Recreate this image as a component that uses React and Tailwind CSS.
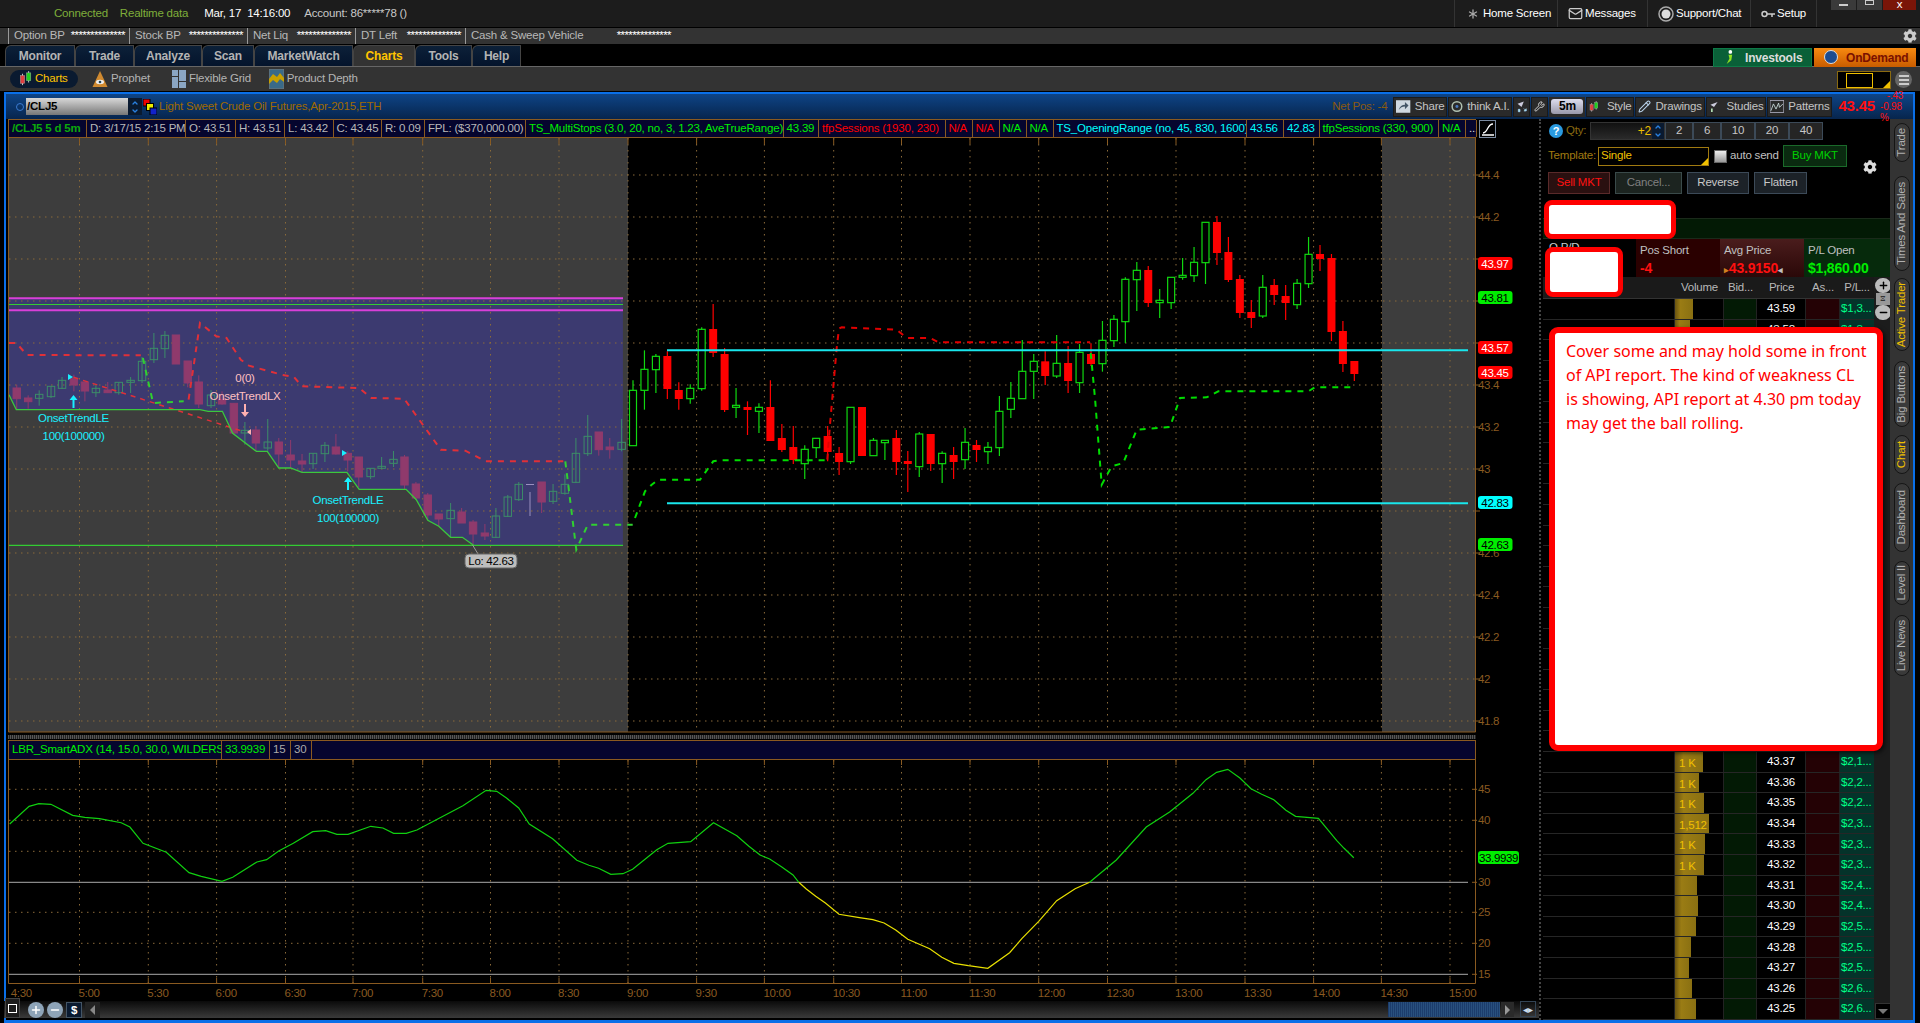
import React from "react";
import { Asterisk, Mail, ChevronUp, ChevronDown, Plus, Minus, Wrench, Pencil } from "lucide-react";
import { FaCog } from "react-icons/fa";

// bright candles, [wickTop, bodyTop, bodyBottom, wickBottom, dir]
const candles = [
  [547, 577, 743, 743, "u"], [457, 514, 577, 635, "u"], [468, 475, 515, 585, "u"], [460, 474, 573, 603, "d"],
  [553, 576, 603, 635, "d"], [559, 571, 602, 617, "u"], [388, 394, 572, 578, "u"], [318, 393, 465, 477, "d"],
  [450, 468, 636, 642, "d"], [570, 622, 628, 660, "u"], [610, 627, 636, 711, "d"], [616, 628, 640, 705, "u"],
  [547, 627, 729, 729, "d"], [678, 720, 756, 762, "d"], [684, 747, 786, 798, "d"], [742, 754, 797, 843, "u"],
  [721, 721, 749, 780, "u"], [684, 714, 762, 790, "d"], [747, 765, 792, 831, "d"], [628, 628, 791, 798, "u"],
  [627, 627, 774, 774, "d"], [720, 727, 773, 773, "u"], [727, 727, 734, 786, "u"], [696, 720, 792, 831, "d"],
  [759, 789, 798, 882, "d"], [702, 708, 806, 837, "u"], [708, 708, 798, 819, "d"], [760, 766, 797, 855, "u"],
  [747, 771, 792, 843, "d"], [690, 733, 785, 813, "u"], [726, 741, 756, 792, "d"], [732, 748, 761, 798, "u"],
  [594, 640, 749, 774, "u"], [552, 601, 634, 660, "u"], [426, 520, 602, 602, "u"], [468, 490, 520, 603, "u"],
  [460, 490, 534, 561, "d"], [411, 496, 534, 540, "u"], [444, 495, 549, 585, "d"], [438, 463, 554, 585, "u"],
  [436, 468, 498, 504, "d"], [369, 427, 497, 521, "u"], [351, 364, 428, 447, "u"], [238, 244, 371, 435, "u"],
  [192, 217, 245, 339, "u"], [204, 216, 315, 327, "d"], [273, 307, 314, 360, "u"], [238, 238, 314, 333, "u"],
  [180, 232, 238, 245, "u"], [147, 193, 233, 252, "u"], [73, 73, 194, 258, "u"], [54, 72, 165, 201, "d"],
  [117, 162, 246, 252, "d"], [231, 243, 345, 360, "d"], [306, 342, 360, 390, "d"], [231, 268, 354, 360, "u"],
  [243, 261, 291, 321, "d"], [261, 294, 315, 366, "d"], [243, 256, 320, 333, "u"], [117, 169, 257, 270, "u"],
  [141, 168, 183, 219, "d"], [168, 180, 402, 429, "d"], [369, 399, 498, 522, "d"], [489, 489, 528, 549, "d"],
];

// pre market candles, [x, wickTop, bodyTop, bodyBottom, wickBottom, dir]
const oldCandles = [
  [41, 320, 330, 362, 395, "d"], [69, 352, 360, 371, 392, "d"], [96, 337, 349, 361, 383, "u"], [125, 325, 325, 356, 360, "u"],
  [152, 297, 307, 331, 333, "u"], [181, 290, 302, 321, 340, "d"], [208, 312, 312, 339, 370, "d"], [235, 320, 331, 344, 357, "u"],
  [264, 312, 336, 344, 345, "d"], [291, 313, 313, 344, 350, "u"], [320, 297, 307, 313, 345, "u"], [348, 237, 250, 308, 315, "u"],
  [377, 165, 211, 245, 255, "u"], [404, 159, 172, 212, 240, "u"], [431, 171, 171, 258, 258, "d"], [460, 249, 249, 315, 328, "d"],
  [487, 292, 312, 378, 390, "d"], [517, 336, 351, 383, 390, "u"], [544, 340, 364, 378, 380, "d"], [573, 376, 376, 465, 468, "d"],
  [600, 432, 457, 465, 500, "u"], [627, 445, 456, 495, 518, "d"], [656, 423, 492, 510, 518, "u"], [683, 480, 492, 528, 570, "d"],
  [712, 486, 531, 546, 570, "d"], [740, 528, 549, 558, 582, "d"], [767, 526, 526, 557, 573, "u"], [796, 492, 502, 527, 552, "u"],
  [823, 468, 507, 528, 530, "d"], [852, 520, 526, 546, 580, "d"], [879, 537, 537, 597, 627, "d"], [908, 571, 571, 596, 603, "u"],
  [935, 537, 565, 571, 573, "u"], [964, 519, 544, 556, 567, "u"], [991, 531, 537, 621, 633, "d"], [1019, 612, 618, 660, 664, "d"],
  [1048, 645, 651, 711, 726, "d"], [1075, 708, 708, 723, 745, "d"], [1104, 675, 697, 722, 778, "u"], [1131, 690, 702, 735, 735, "d"],
  [1159, 726, 732, 768, 800, "d"], [1188, 738, 765, 774, 786, "d"], [1215, 690, 714, 778, 780, "u"], [1244, 651, 657, 715, 717, "u"],
  [1271, 612, 619, 665, 669, "u"], [1327, 612, 612, 672, 705, "d"], [1355, 618, 640, 670, 678, "u"], [1384, 589, 619, 646, 650, "u"],
  [1411, 480, 526, 613, 615, "u"], [1440, 411, 475, 527, 534, "u"], [1467, 462, 462, 515, 533, "d"], [1494, 480, 507, 515, 542, "d"],
  [1523, 423, 493, 514, 520, "u"],
];

const gridX = [79.5, 148.3, 216.6, 285.5, 353, 422.7, 490.5, 559, 628, 696.6, 764.4, 833.7, 901.5, 970, 1038.7, 1107.5, 1176, 1245, 1313.6, 1381.4, 1450];
const times = ["5:00", "5:30", "6:00", "6:30", "7:00", "7:30", "8:00", "8:30", "9:00", "9:30", "10:00", "10:30", "11:00", "11:30", "12:00", "12:30", "13:00", "13:30", "14:00", "14:30", "15:00"];
const gridY = [177, 219, 261, 303, 345, 387, 429, 471, 513, 555, 597, 639, 681, 723];
const priceLabels = [[177, "44.4"], [219, "44.2"], [387, "43.4"], [429, "43.2"], [471, "43"], [555, "42.6"], [597, "42.4"], [639, "42.2"], [681, "42"], [723, "41.8"]];

const a4 = (pts) => pts.map(([x, y]) => `${(x / 2.45).toFixed(1)},${(280 + y / 3).toFixed(1)}`).join(" ");
const a5 = (pts) => pts.map(([x, y]) => `${(620 + x / 3).toFixed(1)},${(200 + y / 3).toFixed(1)}`).join(" ");
const a6 = (pts) => pts.map(([x, y]) => `${(1060 + x / 3).toFixed(1)},${(200 + y / 3).toFixed(1)}`).join(" ");
const a8 = (pts) => pts.map(([x, y]) => `${(x / 2.063).toFixed(1)},${(730 + y / 3).toFixed(1)}`).join(" ");
const a9 = (pts) => pts.map(([x, y]) => `${(760 + x / 2.063).toFixed(1)},${(730 + y / 3).toFixed(1)}`).join(" ");

const CandleIcon = ({ className }) => (
  <svg viewBox="0 0 16 18" className={className}>
    <path d="M4 3v13M11 0v13" stroke="#ddd" strokeWidth="1" />
    <rect x="1.5" y="5" width="5" height="9" fill="#e04040" stroke="#aaa" strokeWidth=".5" />
    <rect x="8.5" y="2" width="5" height="9" fill="#20d020" stroke="#aaa" strokeWidth=".5" />
  </svg>
);

const Arrow = ({ x, y, color, down }) => (
  <path
    d={down ? `M${x - 1} ${y}h2v8h3l-4 5l-4 -5h3z` : `M${x} ${y}l4 5h-3v8h-2v-8h-3z`}
    fill={color}
  />
);

const MainChart = () => (
  <svg viewBox="4 140 1537 597" className="block w-[1537px] h-[597px]">
    <rect x="8" y="140" width="620" height="594" fill="#3d3d3d" />
    <rect x="1382" y="140" width="93" height="594" fill="#3d3d3d" />
    <polygon
      points={a4([[22, 61], [1526, 61], [1526, 802], [1160, 802], [1133, 778], [1104, 778], [1075, 745], [1048, 727], [1020, 665], [995, 634], [880, 634], [850, 583], [740, 583], [712, 570], [683, 570], [655, 520], [628, 520], [570, 466], [545, 400], [510, 400], [490, 395], [40, 395], [22, 350]])}
      fill="#3c3a70"
    />
    {gridY.map((y) => (
      <line key={y} x1="9" x2="1475" y1={y} y2={y} stroke="#8a6a3a" strokeDasharray="1.5 4.5" />
    ))}
    {gridX.map((x) => (
      <g key={x}>
        <line x1={x} x2={x} y1="140" y2="734" stroke="#8a6a3a" strokeDasharray="1.5 4.5" />
        <line x1={x} x2={x} y1="140" y2="146" stroke="#8a5a20" />
      </g>
    ))}
    {oldCandles.map(([x, wt, bt, bb, wb, d]) => {
      const cx = x / 2.45;
      const c = d === "u" ? "#3c8c68" : "#8f3a6c";
      return (
        <g key={x}>
          <line x1={cx} x2={cx} y1={280 + wt / 3} y2={280 + wb / 3} stroke={c} />
          <rect x={cx - 3.7} y={280 + bt / 3} width="7.4" height={(bb - bt) / 3} fill={d === "u" ? "none" : c} stroke={c} />
        </g>
      );
    })}
    <line x1="530" x2="530" y1="518" y2="494" stroke="#9a90c0" />
    <line x1="526" x2="534" y1="486.5" y2="486.5" stroke="#9a90c0" />
    <polyline points={a4([[22, 195], [40, 195], [66, 231], [345, 232]])} fill="none" stroke="#e03038" strokeWidth="2" strokeDasharray="6 6" />
    <polyline points={a4([[462, 365], [490, 135], [530, 175], [555, 180], [590, 245], [610, 263], [690, 290], [720, 297], [740, 325], [880, 330], [910, 360], [990, 362], [1080, 515], [1140, 518], [1190, 550], [1380, 550]])} fill="none" stroke="#e03038" strokeWidth="2" strokeDasharray="6 6" />
    <polyline points={a4([[180, 298], [600, 462]])} fill="none" stroke="#e03038" strokeWidth="1.5" strokeDasharray="5 5" />
    <polyline points={a4([[350, 240], [375, 375], [450, 370]])} fill="none" stroke="#30d030" strokeWidth="2" strokeDasharray="6 6" />
    <polyline points={a4([[1385, 550], [1412, 815], [1440, 740], [1550, 740]])} fill="none" stroke="#30d030" strokeWidth="2" strokeDasharray="6 6" />
    <polyline points={a4([[22, 350], [40, 395], [490, 395], [510, 400], [545, 400], [570, 466], [628, 520], [655, 520], [683, 570], [712, 570], [740, 583], [850, 583], [880, 634], [995, 634], [1020, 665], [1048, 727], [1075, 745], [1104, 778], [1133, 778], [1160, 802]])} fill="none" stroke="#3cc83c" strokeWidth="1.3" />
    <line x1="9" x2="623" y1="300.3" y2="300.3" stroke="#d93fd9" strokeWidth="2" />
    <line x1="9" x2="623" y1="306.5" y2="306.5" stroke="#33cc33" strokeWidth="1.2" />
    <line x1="9" x2="623" y1="312.3" y2="312.3" stroke="#d93fd9" strokeWidth="2" />
    <line x1="9" x2="623" y1="547.3" y2="547.3" stroke="#33cc33" strokeWidth="1.2" />

    {candles.map(([wt, bt, bb, wb, d], i) => {
      const cx = 633 + 11.45 * i;
      const c = d === "u" ? "#10d810" : "#ff0000";
      return (
        <g key={i}>
          <line x1={cx} x2={cx} y1={200 + wt / 3} y2={200 + wb / 3} stroke={c} strokeWidth="1.2" />
          {d === "u" ? (
            <rect x={cx - 3.5} y={200 + bt / 3} width="7" height={(bb - bt) / 3} fill="#000" stroke={c} strokeWidth="1.2" />
          ) : (
            <rect x={cx - 4} y={200 + bt / 3} width="8" height={(bb - bt) / 3} fill={c} />
          )}
        </g>
      );
    })}
    <polyline points={a5([[45, 960], [60, 920], [75, 880], [95, 860], [115, 845], [240, 845], [280, 790], [300, 787], [620, 787]])} fill="none" stroke="#00dd00" strokeWidth="2" strokeDasharray="6 6" />
    <polyline points={a5([[622, 785], [630, 680], [650, 450], [657, 392], [665, 388], [830, 395], [860, 420], [930, 420], [955, 433], [1410, 433]])} fill="none" stroke="#e00000" strokeWidth="2" strokeDasharray="6 6" />
    <polyline points={a6([[92, 465], [105, 600], [125, 860], [155, 805], [190, 795], [230, 695], [330, 687], [360, 600], [440, 598], [475, 580], [745, 580], [765, 568], [880, 568]])} fill="none" stroke="#00dd00" strokeWidth="2" strokeDasharray="6 6" />
    <line x1="667" x2="1468" y1="352.3" y2="352.3" stroke="#19e6ec" strokeWidth="2" />
    <line x1="667" x2="1468" y1="505.3" y2="505.3" stroke="#19e6ec" strokeWidth="2" />

    <Arrow x={73.5} y={397} color="#19f0ff" />
    <Arrow x={348} y={479} color="#19f0ff" />
    <Arrow x={245} y={406} color="#ffb0b0" down />
    <polygon points="68,376 73,379 68,382" fill="#19f0ff" />
    <polygon points="342,452 347,455 342,458" fill="#19f0ff" />
    <polygon points="251,431 247,434 251,437" fill="#ffb0b0" />
    <g className="text-[11.5px] tracking-[-0.3px]" textAnchor="middle">
      <text x="73.5" y="424" fill="#19f0ff">OnsetTrendLE</text>
      <text x="73.5" y="442" fill="#19f0ff">100(100000)</text>
      <text x="348" y="506" fill="#19f0ff">OnsetTrendLE</text>
      <text x="348" y="524" fill="#19f0ff">100(100000)</text>
      <text x="245" y="384" fill="#ffc0c0">0(0)</text>
      <text x="245" y="402" fill="#ffc0c0">OnsetTrendLX</text>
    </g>
    <line x1="472.6" y1="547" x2="478" y2="556" stroke="#999" />
    <rect x="465" y="556" width="52" height="14" rx="4" fill="#bdbdbd" stroke="#666" />
    <text x="491" y="567" textAnchor="middle" fill="#000" className="text-[11.5px] tracking-[-0.3px]">Lo: 42.63</text>

    <path d="M8.5 140V734H1475.5V140" fill="none" stroke="#8a5a20" />
    {gridY.map((y) => (
      <line key={y} x1="1475" x2="1480" y1={y} y2={y} stroke="#8a5a20" />
    ))}
    <g fill="#8a5a20" className="text-[11.5px] tracking-[-0.3px]">
      {priceLabels.map(([y, t]) => (
        <text key={y} x="1478" y={y + 4}>{t}</text>
      ))}
    </g>
    {[
      [259, "43.97", "#ff0000", "#fff"],
      [293, "43.81", "#00ee00", "#000"],
      [343, "43.57", "#ff0000", "#fff"],
      [368, "43.45", "#ff0000", "#fff"],
      [498, "42.83", "#00ffff", "#000"],
      [540, "42.63", "#00ee00", "#000"],
    ].map(([y, t, bg, fg]) => (
      <g key={y}>
        <rect x="1478" y={y} width="34.5" height="13" rx="3" fill={bg} />
        <text x="1495" y={y + 10.5} textAnchor="middle" fill={fg} className="text-[11.5px] tracking-[-0.3px]">{t}</text>
      </g>
    ))}
  </svg>
);

const adxGreen1 = [[20, 288], [60, 235], [80, 227], [105, 229], [150, 262], [175, 268], [205, 272], [250, 284], [268, 297], [295, 346], [343, 373], [390, 434], [415, 445], [458, 460], [480, 448], [530, 402], [550, 395], [575, 369], [605, 346], [645, 311], [672, 308], [695, 319], [718, 319], [765, 295], [790, 300], [812, 316], [838, 316], [860, 306], [955, 233], [1003, 187], [1025, 190], [1045, 210], [1070, 240], [1092, 288], [1140, 332], [1190, 397], [1215, 412], [1235, 421], [1260, 439], [1285, 437], [1305, 424], [1355, 365], [1378, 346], [1425, 341], [1472, 284], [1520, 323], [1545, 355], [1568, 381]];
const adxGreen2 = [[0, 381], [20, 393], [45, 417], [68, 441], [80, 463]];
const adxYellow = [[80, 463], [95, 482], [115, 505], [135, 525], [163, 559], [205, 569], [233, 575], [256, 585], [280, 606], [305, 634], [350, 662], [375, 688], [400, 706], [430, 713], [470, 721], [515, 674], [540, 632], [575, 580], [612, 518], [650, 482], [680, 463]];
const adxGreen3 = [[680, 463], [735, 396], [797, 297], [845, 252], [893, 196], [920, 155], [942, 133], [965, 124], [990, 150], [1013, 182], [1035, 199], [1060, 215], [1085, 247], [1105, 265], [1152, 271], [1190, 338], [1205, 361], [1225, 389]];

const SubChart = () => (
  <svg viewBox="4 762 1537 241" className="block w-[1537px] h-[241px]">
    {[791.3, 822.3, 853.3, 914.3, 945.3].map((y) => (
      <line key={y} x1="9" x2="1465" y1={y} y2={y} stroke="#8a6a3a" strokeDasharray="1.5 4.5" />
    ))}
    {gridX.map((x) => (
      <g key={x}>
        <line x1={x} x2={x} y1="762" y2="986" stroke="#8a6a3a" strokeDasharray="1.5 4.5" />
        <line x1={x} x2={x} y1="762" y2="767" stroke="#8a5a20" />
        <line x1={x} x2={x} y1="980" y2="986" stroke="#8a5a20" />
      </g>
    ))}
    <line x1="9" x2="1468" y1="884.3" y2="884.3" stroke="#aaa" />
    <line x1="9" x2="1468" y1="976.3" y2="976.3" stroke="#aaa" />
    <polyline points={a8(adxGreen1)} fill="none" stroke="#10d010" strokeWidth="1.2" />
    <polyline points={a9(adxGreen2)} fill="none" stroke="#10d010" strokeWidth="1.2" />
    <polyline points={a9(adxYellow)} fill="none" stroke="#e8e000" strokeWidth="1.2" />
    <polyline points={a9(adxGreen3)} fill="none" stroke="#10d010" strokeWidth="1.2" />
    <path d="M8.5 762V985.5H1475.5V762" fill="none" stroke="#8a5a20" />
    <g fill="#8a5a20" className="text-[11.5px] tracking-[-0.3px]">
      {[[791.3, "45"], [822.3, "40"], [884.3, "30"], [914.3, "25"], [945.3, "20"], [976.3, "15"]].map(([y, t]) => (
        <g key={t}>
          <line x1="1472" x2="1477" y1={y} y2={y} stroke="#8a5a20" />
          <text x="1478" y={y + 4}>{t}</text>
        </g>
      ))}
      <text x="10.7" y="999">4:30</text>
      {times.map((t, i) => (
        <text key={t} x={gridX[i] - 1} y="999">{t}</text>
      ))}
    </g>
    <rect x="1478" y="853" width="41" height="13" rx="3" fill="#00ee00" />
    <text x="1498.5" y="863.5" textAnchor="middle" fill="#000" className="text-[11.5px] tracking-[-0.4px]">33.9939</text>
  </svg>
);

const StudyCell = ({ w, c, bold, children }) => (
  <div className={`shrink-0 h-full flex items-center pl-[3px] whitespace-nowrap overflow-hidden border-r border-[#8a5a20] ${bold ? "font-bold" : ""}`} style={{ width: w, color: c }}>
    {children}
  </div>
);

const studies = [
  [78, "#0ca80c", "/CLJ5 5 d 5m", true],
  [99, "#b8b8b8", "D: 3/17/15 2:15 PM"],
  [50, "#b8b8b8", "O: 43.51"],
  [49, "#b8b8b8", "H: 43.51"],
  [48.5, "#b8b8b8", "L: 43.42"],
  [48.5, "#b8b8b8", "C: 43.45"],
  [43, "#b8b8b8", "R: 0.09"],
  [101, "#b8b8b8", "FPL: ($370,000.00)"],
  [257.5, "#00ee00", "TS_MultiStops (3.0, 20, no, 3, 1.23, AveTrueRange)"],
  [35.5, "#00ee00", "43.39"],
  [126.5, "#ff0000", "tfpSessions (1930, 230)"],
  [27, "#ff0000", "N/A"],
  [27, "#ff0000", "N/A"],
  [27, "#00ee00", "N/A"],
  [27, "#00ee00", "N/A"],
  [193.5, "#00ffff", "TS_OpeningRange (no, 45, 830, 1600)"],
  [37, "#00ffff", "43.56"],
  [35.5, "#00ffff", "42.83"],
  [119.5, "#00ee00", "tfpSessions (330, 900)"],
  [27, "#00ee00", "N/A"],
  [10.5, "#ddd", "..."],
];

const tabs = [
  ["Monitor", 70], ["Trade", 59], ["Analyze", 68], ["Scan", 52], ["MarketWatch", 99], ["Charts", 62], ["Tools", 57], ["Help", 49],
];

const ToolBtn = ({ w, children }) => (
  <div className="shrink-0 h-[20px] flex items-center gap-[4px] px-[2px] bg-[#2a2a2a] border border-[#1a1a1a] text-[#c4c4c4] whitespace-nowrap" style={{ width: w }}>
    {children}
  </div>
);

const QtyBtn = ({ w, children }) => (
  <div className="shrink-0 h-[18px] flex items-center justify-center bg-[#252525] border border-[#3c4a58] text-[#c8c8c8]" style={{ width: w }}>{children}</div>
);

const ActBtn = ({ w, className, children }) => (
  <div className={`shrink-0 h-[22px] flex items-center justify-center border ${className}`} style={{ width: w }}>{children}</div>
);

const volumes = {
  0: 18, 1: 15, 21: 35, 22: 28, 23: 24, 24: 29, 25: 34, 26: 30, 27: 29, 28: 22, 29: 23, 30: 21, 31: 16, 32: 14, 33: 17, 34: 21,
};
const volText = { 21: "1,554", 22: "1 K", 23: "1 K", 24: "1 K", 25: "1,512", 26: "1 K", 27: "1 K" };

const LadderRow = ({ i }) => {
  const price = 43.59 - i * 0.01;
  const pl = Math.round((43.915 - price) * 4000);
  return (
    <div className="grid grid-cols-[132px_49px_33px_49px_34px_34px] h-[21px] border-b border-[#262626]">
      <div className="border-r border-[#222]" />
      <div className="relative border-r border-[#222]">
        <div className="absolute left-0 top-0 bottom-0 bg-[linear-gradient(90deg,#6a5410,#9a7c14_30%,#8a7012)]" style={{ width: volumes[i] ?? 26 }} />
        <span className="absolute left-[4px] top-[3px] text-[#f0c000]">{volText[i]}</span>
      </div>
      <div className="bg-[#031a05] border-r border-[#222]" />
      <div className="flex items-center justify-center text-white border-r border-[#222]">{price.toFixed(2)}</div>
      <div className="bg-[#240205] border-r border-[#222]" />
      <div className="bg-[#04332a] flex items-center pl-[1px] text-[#00ff88] whitespace-nowrap">{`$${Math.floor(pl / 1000)},${Math.floor(pl / 100) % 10}...`}</div>
    </div>
  );
};

const SideTab = ({ active, h, mt, children }) => (
  <div className={`w-[16px] flex items-center justify-center rounded-[8px] border border-[#151515] bg-[#3a3a3a] ${active ? "text-[#f0c000]" : "text-[#b0b0b0]"}`} style={{ height: h, marginTop: mt }}>
    <span className="[writing-mode:vertical-rl] rotate-180 whitespace-nowrap">{children}</span>
  </div>
);

export default function App() {
  return (
    <div className="w-[1920px] h-[1023px] overflow-hidden bg-black font-['Liberation_Sans',sans-serif] text-[11.5px] tracking-[-0.2px] flex flex-col">
      {/* top status */}
      <div className="h-[28px] shrink-0 bg-[#1c1c1c] border-b border-black flex items-center text-[#c8c8c8] relative">
        <span className="ml-[54px] text-[#7fae3a]">Connected</span>
        <span className="ml-[12px] text-[#7fae3a]">Realtime data</span>
        <span className="ml-[16px] text-white">Mar, 17&nbsp;&nbsp;14:16:00</span>
        <span className="ml-[14px]">Account: 86*****78 ()</span>
        <div className="ml-auto mr-[103px] flex items-center h-full text-white">
          <div className="w-[103px] h-full border-l border-[#333] flex items-center pl-[10px] gap-[2px]"><Asterisk size={16} className="text-[#aaa]" />Home Screen</div>
          <div className="w-[90px] h-full border-l border-[#333] flex items-center pl-[10px] gap-[2px]"><Mail size={15} className="text-[#ccc]" />Messages</div>
          <div className="w-[103px] h-full border-l border-[#333] flex items-center pl-[10px] gap-[2px]">
            <svg viewBox="0 0 16 16" className="w-[16px] h-[16px]"><circle cx="8" cy="8" r="7" fill="none" stroke="#aaa" strokeWidth="1.5" /><circle cx="8" cy="8" r="4.5" fill="#ddd" /></svg>
            Support/Chat
          </div>
          <div className="w-[67px] h-full border-x border-[#333] flex items-center pl-[10px] gap-[2px]">
            <svg viewBox="0 0 14 8" className="w-[14px] h-[8px]"><circle cx="3.5" cy="4" r="2.5" fill="none" stroke="#ccc" strokeWidth="1.5" /><path d="M6 4h8M11 4v3" stroke="#ccc" strokeWidth="1.5" /></svg>
            Setup
          </div>
        </div>
        <div className="absolute right-[4px] top-0 flex gap-[1px]">
          <div className="w-[25px] h-[10px] bg-[#3a3a3a] flex justify-center items-center"><div className="w-[9px] h-[2px] bg-[#ccc]" /></div>
          <div className="w-[25px] h-[10px] bg-[#3a3a3a] flex justify-center"><div className="w-[9px] h-[5px] border border-[#ccc]" /></div>
          <div className="w-[33px] h-[10px] bg-[#7a1508] text-center text-white leading-[8px]">x</div>
        </div>
      </div>

      {/* account bar */}
      <div className="h-[16px] shrink-0 bg-[#333] flex items-center text-[#b8b8b8] pl-[8px] relative">
        {[
          ["Option BP", 121],
          ["Stock BP", 118],
          ["Net Liq", 108],
          ["DT Left", 110],
          ["Cash & Sweep Vehicle", 210],
        ].map(([t, w]) => (
          <div key={t} className="h-full flex items-center justify-between border-l border-[#999] pl-[5px] pr-[4px]" style={{ width: w }}>
            <span>{t}</span>
            <span className="text-white tracking-[-0.6px]">**************</span>
          </div>
        ))}
        <FaCog className="absolute right-[3px] top-[1px] text-[#ccc]" size={14} />
      </div>

      {/* main tabs */}
      <div className="h-[23px] shrink-0 bg-black flex items-end pl-[5px] border-b border-[#666] relative">
        {tabs.map(([t, w]) => (
          <div
            key={t}
            className={`h-[21px] flex items-center justify-center text-[12px] font-bold rounded-tl-[6px] border-t border-x border-[#444] ${t === "Charts" ? "bg-[#333] text-[#ffc400]" : "bg-[linear-gradient(180deg,#0c2038,#04142c)] text-[#b4b4b4]"}`}
            style={{ width: w }}
          >
            {t}
          </div>
        ))}
        <div className="absolute left-[1713px] top-[4px] w-[99px] h-[19px] bg-[#0a6038] border border-[#0e7a48] flex items-center text-[#ddd] font-bold text-[12px] pl-[31px]">Investools</div>
        <div className="absolute left-[1814px] top-[4px] w-[102px] h-[19px] bg-[linear-gradient(180deg,#f88a10,#c85c00)] flex items-center text-[#7a1000] font-bold text-[12px] pl-[32px]">OnDemand</div>
        <svg viewBox="0 0 14 16" className="absolute left-[1722px] top-[6px] w-[13px] h-[15px]"><circle cx="9" cy="2" r="2" fill="#fff" /><path d="M7 5h4l-1 6l-5 4l3 -6z" fill="#8fe020" /></svg>
        <div className="absolute left-[1824px] top-[6px] w-[14px] h-[14px] rounded-full bg-[#1c4c90] border border-[#ddd]" />
      </div>

      {/* sub tabs */}
      <div className="h-[24px] shrink-0 bg-[#333] flex items-center text-[#b4b4b4] pl-[10px] relative">
        <div className="w-[68px] h-[18px] rounded-full bg-[#0a1a30] flex items-center pl-[9px] gap-[2px] text-[#ffc400]"><CandleIcon className="w-[14px] h-[16px]" />Charts</div>
        <div className="ml-[14px] flex items-center gap-[3px]">
          <svg viewBox="0 0 16 18" className="w-[16px] h-[18px]"><path d="M8 1L15.5 17H.5z" fill="#d08a30" /><ellipse cx="8" cy="12" rx="4" ry="2.2" fill="#eee" /><circle cx="8" cy="12" r="1.3" fill="#245" /></svg>
          Prophet
        </div>
        <div className="ml-[22px] flex items-center gap-[3px]">
          <svg viewBox="0 0 14 18" className="w-[14px] h-[18px]"><rect width="6" height="6" y="0" fill="#8aa6c4" /><rect x="7" width="7" height="11" fill="#8aa6c4" /><rect y="7" width="6" height="11" fill="#8aa6c4" /><rect x="7" y="12" width="7" height="6" fill="#8aa6c4" /></svg>
          Flexible Grid
        </div>
        <div className="ml-[18px] flex items-center gap-[3px]">
          <svg viewBox="0 0 15 20" className="w-[15px] h-[20px]"><rect width="15" height="20" fill="#3a6a88" stroke="#777" /><path d="M0 10l4-5l4 3l3-4l4 5v4l-4-3l-3 4l-4-3l-4 4z" fill="#c8a000" /></svg>
          Product Depth
        </div>
        <div className="absolute left-[1837px] top-[4px] w-[54px] h-[18px] border border-[#8a6a10] bg-black flex items-center pl-[8px]">
          <div className="w-[27px] h-[15px] border border-[#f0c000]" />
          <div className="absolute right-0 bottom-0 w-0 h-0 border-l-[7px] border-l-transparent border-b-[7px] border-b-[#f0c000]" />
        </div>
        <div className="absolute left-[1895px] top-[4px] w-[17px] h-[17px] rounded-full bg-[#666] flex flex-col items-center justify-center gap-[2px]">
          <div className="w-[10px] h-[2px] bg-[#ccc]" />
          <div className="w-[10px] h-[2px] bg-[#ccc]" />
          <div className="w-[10px] h-[2px] bg-[#ccc]" />
        </div>
      </div>

      {/* blue framed area */}
      <div className="h-[1px] shrink-0 bg-black" />
      <div className="flex-1 min-h-0 flex flex-col ml-[4px] mr-[5px] border-x-2 border-t-2 border-b-[3px] border-[#0a6fe8] -mx-[0px] box-border">
        {/* header */}
        <div className="h-[25px] shrink-0 bg-[linear-gradient(180deg,#0e4486,#07254d)] flex items-center relative text-[#a06a00] pl-[10px]">
          <div className="w-[8px] h-[8px] rounded-full border border-[#3a7ad0] mr-[2px]" />
          <div className="w-[102px] h-[17px] bg-[linear-gradient(180deg,#d8d8d8,#777)] text-black font-bold flex items-center pl-[1px]">/CLJ5</div>
          <div className="w-[14px] h-[17px] bg-[#0a1a30] flex flex-col items-center justify-center">
            <ChevronUp size={8} strokeWidth={4} className="text-[#2a80e0]" />
            <ChevronDown size={8} strokeWidth={4} className="text-[#2a80e0]" />
          </div>
          <svg viewBox="0 0 14 16" className="w-[14px] h-[16px] ml-[1px]"><rect width="7" height="7" fill="#e00" stroke="#000" /><rect x="3.5" y="4.5" width="7" height="7" fill="#ee0" stroke="#000" /><rect x="7" y="9" width="7" height="7" fill="#12c" stroke="#000" /></svg>
          <span className="ml-[2px]">Light Sweet Crude Oil Futures,Apr-2015,ETH</span>
          <span className="ml-auto text-[#8a5a10]">Net Pos: -4</span>
          <div className="ml-[6px] flex items-center gap-[1px]">
            <ToolBtn w={54}>
              <svg viewBox="0 0 16 14" className="w-[15px] h-[13px]"><rect width="16" height="14" fill="#cfd8e0" /><path d="M3 11c1-4 4-6 7-6V2l4 4l-4 4V7c-3 0-5 1-7 4z" fill="#456" /></svg>
              Share
            </ToolBtn>
            <ToolBtn w={64}>
              <svg viewBox="0 0 16 16" className="w-[15px] h-[15px]"><circle cx="8" cy="8" r="6.5" fill="none" stroke="#b0c0b0" strokeWidth="2" /><circle cx="8" cy="8" r="2" fill="#4a7ac0" /></svg>
              think A.I.
            </ToolBtn>
            <ToolBtn w={17}>
              <svg viewBox="0 0 14 14" className="w-[13px] h-[14px]"><path d="M2 3L10 0L7 7z" fill="#ccd" /><path d="M3 10h2v3H3zM10 9l3 3m0-3v3h-3" stroke="#9cf" fill="#cfc" /></svg>
            </ToolBtn>
            <ToolBtn w={17}><Wrench size={13} className="text-[#ddd]" /></ToolBtn>
            <div className="w-[36px] h-[20px] flex items-center justify-center bg-[#2a2a2a]">
              <div className="w-[32px] h-[15px] rounded-[3px] bg-[linear-gradient(180deg,#dde,#99a)] text-black font-bold text-center text-[12px] leading-[15px]">5m</div>
            </div>
            <ToolBtn w={48}><CandleIcon className="w-[15px] h-[16px]" />&nbsp;Style</ToolBtn>
            <ToolBtn w={70}><Pencil size={13} className="text-[#b8d0e8] shrink-0" />Drawings</ToolBtn>
            <ToolBtn w={60}>
              <svg viewBox="0 0 14 14" className="w-[14px] h-[14px]"><path d="M2 4L12 0L7 7z" fill="#ccd" /><path d="M3 9h2v5H3z" fill="#cfc" /></svg>
              &nbsp;Studies
            </ToolBtn>
            <ToolBtn w={65}>
              <svg viewBox="0 0 16 14" className="w-[15px] h-[13px]"><rect width="16" height="14" fill="none" stroke="#aab" /><path d="M1 12l3-8l3 6l3-7l1 5l4-4" fill="none" stroke="#cdd" /></svg>
              Patterns
            </ToolBtn>
          </div>
          <span className="ml-[6px] text-[#ff1010] font-bold text-[15px]">43.45</span>
          <div className="ml-[5px] mr-[3px] w-[30px] text-[#ff1010] text-[10px] leading-[11px]">
            <div className="text-center">-.43</div>
            <div>-0.98 %</div>
          </div>
        </div>

        <div className="flex-1 min-h-0 flex">
          {/* chart column */}
          <div className="w-[1535px] shrink-0 -ml-[2px] flex flex-col">
            <div className="h-[19px] shrink-0 flex items-center pl-[4px] relative">
              <div className="flex h-full w-[1468px] bg-[#05052e] border-y border-l border-[#8a5a20] ml-0">
                {studies.map(([w, c, t, b], i) => (
                  <StudyCell key={i} w={w} c={c} bold={b}>{t}</StudyCell>
                ))}
              </div>
              <div className="ml-[3px] w-[17px] h-[18px] border border-[#7a8aa0] flex items-center justify-center">
                <svg viewBox="0 0 14 14" className="w-[14px] h-[14px]"><path d="M1 13h12M2 11c5 0 4-9 10-9" fill="none" stroke="#fff" strokeWidth="1.3" /></svg>
              </div>
            </div>
            <MainChart />
            <div className="h-[4px] shrink-0 ml-[4px] w-[1468px] bg-[repeating-linear-gradient(90deg,#555_0_1px,#222_1px_2px)]" />
            <div className="h-[1px] shrink-0" />
            <div className="h-[20px] shrink-0 ml-[4px] w-[1468px] flex bg-[#05052e] border border-[#8a5a20]">
              <StudyCell w={213} c="#00ee00">LBR_SmartADX (14, 15.0, 30.0, WILDERS)</StudyCell>
              <StudyCell w={48} c="#00ee00">33.9939</StudyCell>
              <StudyCell w={21} c="#aaa">15</StudyCell>
              <StudyCell w={21} c="#aaa">30</StudyCell>
            </div>
            <SubChart />
            <div className="h-[17px] shrink-0 bg-[linear-gradient(180deg,#0a0a0a,#3a3a3a)] flex items-center pl-[1px] relative">
              <div className="w-[15px] h-[20px] -mt-[3px] bg-[#1c1c1c] border border-[#444] flex items-center justify-center">
                <div className="w-[9px] h-[9px] border border-white" />
              </div>
              <div className="ml-[8px] w-[16px] h-[16px] rounded-full bg-[#8ea4b8] flex items-center justify-center"><Plus size={12} strokeWidth={3} className="text-white" /></div>
              <div className="ml-[3px] w-[16px] h-[16px] rounded-full bg-[#8ea4b8] flex items-center justify-center"><Minus size={12} strokeWidth={3} className="text-white" /></div>
              <div className="ml-[3px] w-[16px] h-[16px] bg-[#0a1a30] border border-[#456] text-white text-center font-bold leading-[14px]">$</div>
              <div className="ml-[3px] w-[15px] h-[16px] bg-[#222] flex items-center justify-center"><div className="w-0 h-0 border-y-[5px] border-y-transparent border-r-[5px] border-r-[#888]" /></div>
              <div className="absolute left-[1384px] top-[1px] w-[112px] h-[15px] bg-[repeating-linear-gradient(90deg,#1c3c6c_0_1px,#28507e_1px_2px)]" />
              <div className="absolute left-[1497px] top-[1px] w-[13px] h-[15px] bg-[#2a2a2a] flex items-center justify-center"><div className="w-0 h-0 border-y-[5px] border-y-transparent border-l-[5px] border-l-[#999]" /></div>
              <div className="absolute left-[1516px] top-[0px] w-[16px] h-[16px] border border-[#345] flex items-center justify-center text-[#cde] text-[10px]">◂▸</div>
            </div>
          </div>

          {/* active trader */}
          <div className="w-[351px] shrink-0 border-l-2 border-dotted border-[#444] relative flex flex-col pl-[2px] overflow-hidden">
            <div className="h-[18px] mt-[3px] shrink-0 flex items-center">
              <div className="ml-[6px] w-[14px] h-[14px] rounded-full bg-[#2a9ae0] text-white font-bold text-center text-[11px] leading-[14px]">?</div>
              <span className="ml-[3px] w-[24px] text-[#8a6a10]">Qty:</span>
              <div className="w-[75px] h-[18px] bg-[linear-gradient(180deg,#111,#2a2a2a)] border border-[#333] flex items-center justify-end text-[#f0c000] text-[12px] pr-[13px] relative">
                +2
                <div className="absolute right-0 top-0 bottom-0 w-[12px] bg-[#0a1a30] flex flex-col items-center justify-center">
                  <ChevronUp size={8} strokeWidth={4} className="text-[#2a80e0]" />
                  <ChevronDown size={8} strokeWidth={4} className="text-[#2a80e0]" />
                </div>
              </div>
              <QtyBtn w={28}>2</QtyBtn>
              <QtyBtn w={28}>6</QtyBtn>
              <QtyBtn w={34}>10</QtyBtn>
              <QtyBtn w={34}>20</QtyBtn>
              <QtyBtn w={34}>40</QtyBtn>
            </div>
            <div className="h-[22px] mt-[5px] shrink-0 flex items-center">
              <span className="ml-[5px] w-[50px] text-[#a07a10]">Template:</span>
              <div className="w-[111px] h-[19px] bg-black border border-[#a07a10] text-[#f0c000] flex items-center pl-[2px] relative">
                Single
                <div className="absolute right-0 bottom-0 w-0 h-0 border-l-[7px] border-l-transparent border-b-[7px] border-b-[#f0c000]" />
              </div>
              <div className="ml-[5px] w-[13px] h-[13px] bg-[linear-gradient(180deg,#eee,#999)] border border-[#666]" />
              <span className="ml-[3px] w-[53px] text-[#c0c0c0]">auto send</span>
              <ActBtn w={64} className="bg-[#0a2a10] border-[#1a6a2a] text-[#00d000]">Buy MKT</ActBtn>
            </div>
            <div className="h-[22px] mt-[5px] shrink-0 flex items-center gap-[5px] pl-[5px]">
              <ActBtn w={62} className="bg-[#2a1010] border-[#5a2a2a] text-[#ff1010]">Sell MKT</ActBtn>
              <ActBtn w={67} className="bg-[#1c2420] border-[#3a4a4a] text-[#808080]">Cancel...</ActBtn>
              <ActBtn w={62} className="bg-[#1c2228] border-[#3c4a58] text-[#c8c8c8]">Reverse</ActBtn>
              <ActBtn w={53} className="bg-[#1c2228] border-[#3c4a58] text-[#c8c8c8]">Flatten</ActBtn>
            </div>
            <div className="h-[24px] shrink-0" />
            <div className="h-[21px] shrink-0 bg-[#031a05] border-y border-[#1a2a1a]" />
            <div className="h-[38px] shrink-0 flex">
              <div className="w-[93px] text-[#ccc] pl-[6px]">O P/D</div>
              <div className="w-[84px] bg-[#2a0000] pl-[4px] pt-[3px] text-[#c0c0c0]">
                Pos Short
                <div className="text-[#ff1010] font-bold text-[14px] leading-[18px]">-4</div>
              </div>
              <div className="w-[84px] bg-[linear-gradient(180deg,#4a1c1c,#2a0808)] pl-[4px] pt-[3px] text-[#c0c0c0]">
                Avg Price
                <div className="text-[#ff1010] font-bold text-[14px] leading-[18px]"><span className="text-[9px] text-[#d08020]">▸</span>43.9150<span className="text-[9px] text-[#c0c0c0]">◂</span></div>
              </div>
              <div className="w-[86px] bg-[#062a0c] pl-[4px] pt-[3px] text-[#c0c0c0]">
                P/L Open
                <div className="text-[#00ee00] font-bold text-[14px] leading-[18px]">$1,860.00</div>
              </div>
            </div>
            <div className="flex-1 min-h-0 flex">
              <div className="w-[331px] shrink-0 flex flex-col overflow-hidden">
                <div className="h-[22px] shrink-0 grid grid-cols-[132px_49px_33px_49px_34px_34px] bg-[#1a1a1a] text-[#b8b8b8] border-b border-[#333] items-center">
                  <div />
                  <div className="text-center">Volume</div>
                  <div className="text-center">Bid...</div>
                  <div className="text-center">Price</div>
                  <div className="text-center">As...</div>
                  <div className="text-center">P/L...</div>
                </div>
                {Array.from({ length: 35 }, (_, i) => (
                  <LadderRow key={i} i={i} />
                ))}
              </div>
              <div className="w-[18px] shrink-0 bg-[#1c1c1c] flex flex-col items-center relative">
                <div className="w-[16px] h-[15px] mt-[1px] rounded-full bg-[#bbb] flex items-center justify-center"><Plus size={11} strokeWidth={3} className="text-black" /></div>
                <div className="w-[14px] h-[12px] bg-[#999] text-[#333] text-[8px] text-center leading-[12px]">⧖</div>
                <div className="w-[16px] h-[15px] rounded-full bg-[#bbb] flex items-center justify-center"><Minus size={11} strokeWidth={3} className="text-black" /></div>
                <div className="absolute bottom-[1px] left-[1px] w-[16px] h-[16px] bg-black border border-[#333] flex items-center justify-center">
                  <div className="w-0 h-0 border-x-[5px] border-x-transparent border-t-[5px] border-t-[#777]" />
                </div>
              </div>
            </div>

            {/* annotations */}
            <div className="absolute left-[3px] top-[81px] w-[132px] h-[39px] bg-white border-[5px] border-[#ff0000] rounded-[8px]" />
            <div className="absolute left-[4px] top-[128px] w-[78px] h-[50px] bg-white border-[5px] border-[#ff0000] rounded-[8px]" />
            <div className="absolute left-[8px] top-[208px] w-[334px] h-[424px] bg-white border-[6px] border-[#ff0000] rounded-[9px] pl-[11px] pr-[8px] pt-[6px] text-[#ff0000] text-[16px] leading-[24px] tracking-normal font-['Noto_Sans',sans-serif] shadow-[2px_2px_4px_rgba(0,0,0,0.6)]">
              Cover some and may hold some in front of API report. The kind of weakness CL is showing, API report at 4.30 pm today may get the ball rolling.
            </div>
            <FaCog size={14} className="absolute left-[322px] top-[41px] text-[#ddd]" />
          </div>

          {/* side tabs */}
          <div className="flex-1 min-w-0 bg-[#333] flex flex-col items-center">
            <SideTab h={39} mt={4}>Trade</SideTab>
            <SideTab h={95} mt={14}>Times And Sales</SideTab>
            <SideTab active h={73} mt={7}>Active Trader</SideTab>
            <SideTab h={66} mt={10}>Big Buttons</SideTab>
            <SideTab active h={39} mt={8}>Chart</SideTab>
            <SideTab h={69} mt={9}>Dashboard</SideTab>
            <SideTab h={44} mt={9}>Level II</SideTab>
            <SideTab h={61} mt={10}>Live News</SideTab>
          </div>
        </div>
      </div>
    </div>
  );
}
